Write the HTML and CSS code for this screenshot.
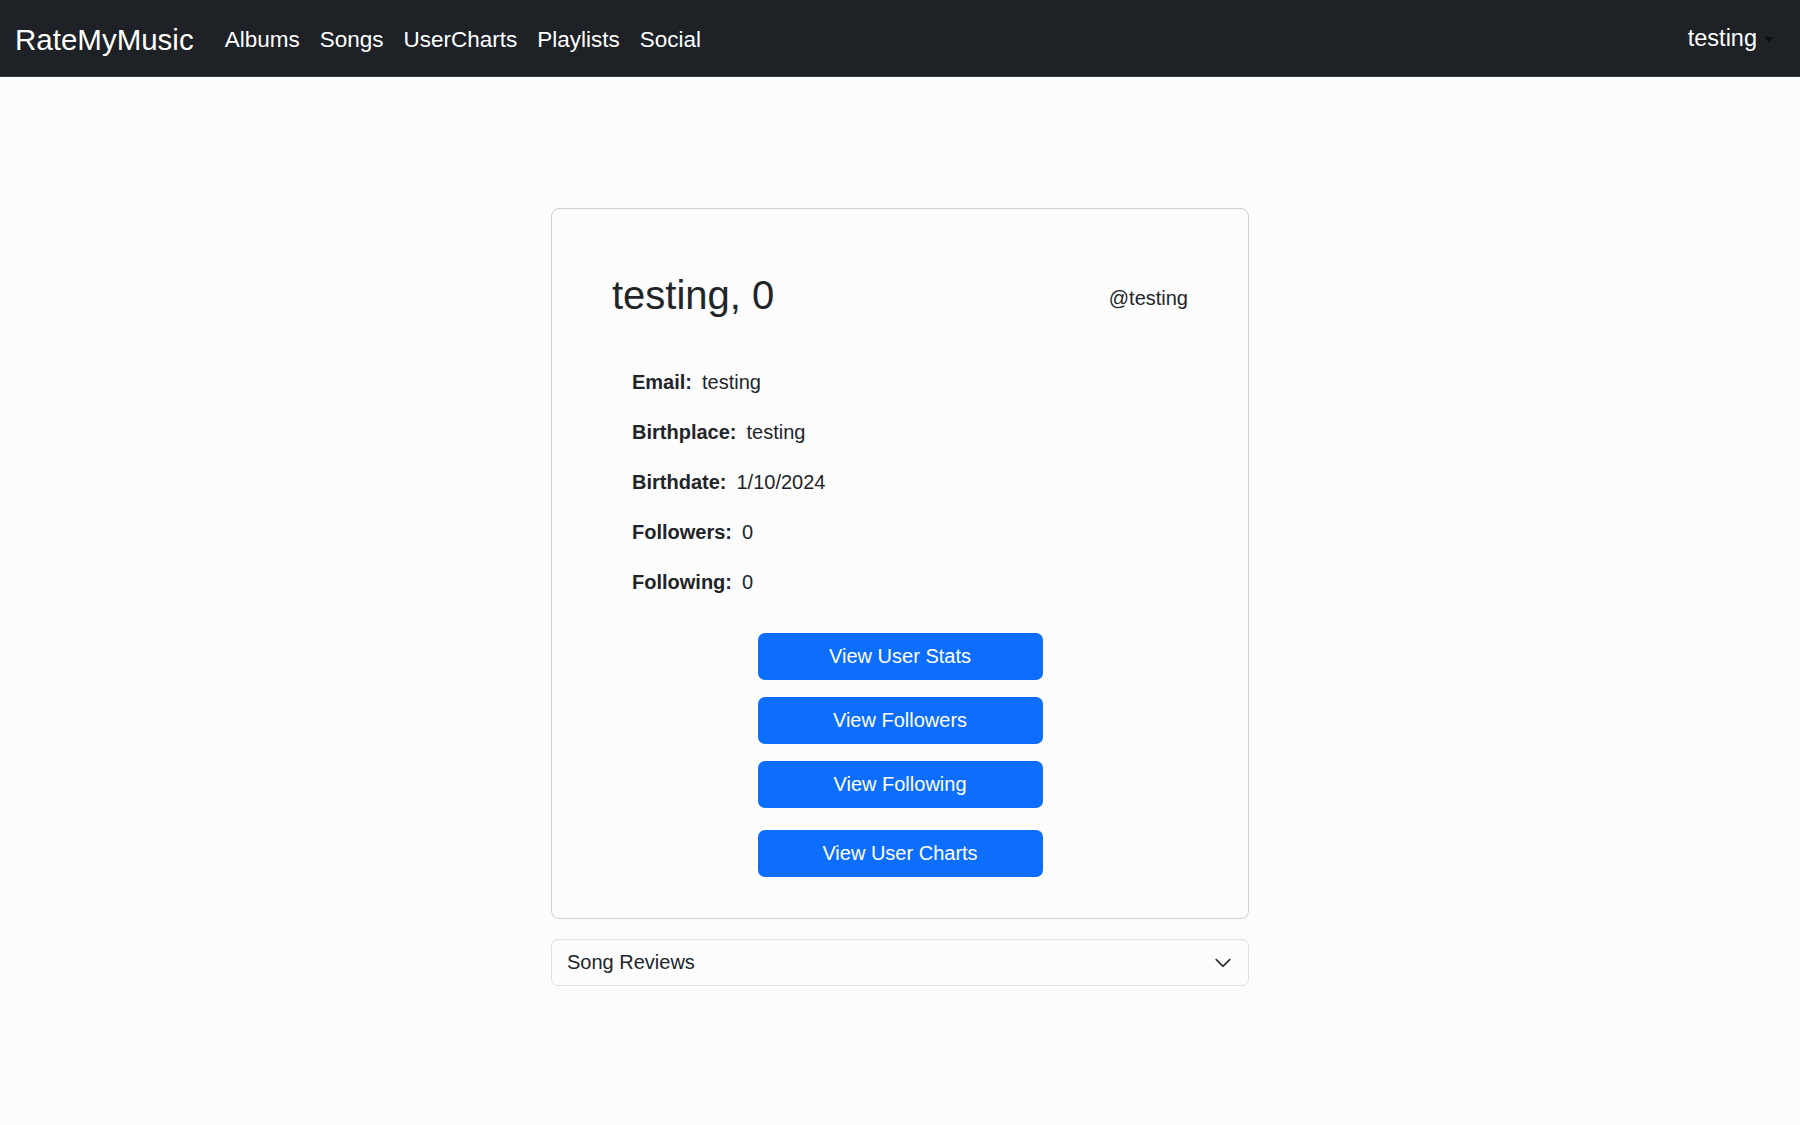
FILE: index.html
```html
<!DOCTYPE html>
<html lang="en">
<head>
<meta charset="utf-8">
<title>RateMyMusic - Profile</title>
<link rel="stylesheet" href="styles.css">
</head>
<body>
<nav class="navbar">
  <a class="brand" href="#">RateMyMusic</a>
  <ul class="nav-links">
    <li><a href="#">Albums</a></li>
    <li><a href="#">Songs</a></li>
    <li><a href="#">UserCharts</a></li>
    <li><a href="#">Playlists</a></li>
    <li><a href="#">Social</a></li>
  </ul>
  <div class="user-menu">
    <span class="user-name">testing</span>
    <span class="caret"></span>
  </div>
</nav>

<main class="container">
  <section class="profile-card">
    <div class="profile-header">
      <h1 class="profile-title">testing, 0</h1>
      <span class="profile-handle">@testing</span>
    </div>
    <div class="details">
      <p class="detail"><span class="label">Email:</span>testing</p>
      <p class="detail"><span class="label">Birthplace:</span>testing</p>
      <p class="detail"><span class="label">Birthdate:</span>1/10/2024</p>
      <p class="detail"><span class="label">Followers:</span>0</p>
      <p class="detail"><span class="label">Following:</span>0</p>
    </div>
    <div class="actions">
      <button class="btn">View User Stats</button>
      <button class="btn">View Followers</button>
      <button class="btn">View Following</button>
      <button class="btn btn-charts">View User Charts</button>
    </div>
  </section>

  <div class="accordion">
    <button class="accordion-button">
      <span>Song Reviews</span>
      <svg class="chevron" viewBox="0 0 16 16" width="18" height="18" aria-hidden="true"><path fill="#212529" stroke="#212529" stroke-width="0.7" stroke-linejoin="round" d="M1.646 4.646a.5.5 0 0 1 .708 0L8 10.293l5.646-5.647a.5.5 0 0 1 .708.708l-6 6a.5.5 0 0 1-.708 0l-6-6a.5.5 0 0 1 0-.708z"/></svg>
    </button>
  </div>
</main>
</body>
</html>
```

FILE: styles.css
```css
* { box-sizing: border-box; }

html, body {
  margin: 0;
  padding: 0;
}

body {
  background: #fcfcfc;
  color: #212529;
  font-family: "Liberation Sans", Arial, sans-serif;
  font-size: 20px;
}

a { text-decoration: none; color: inherit; }

.navbar {
  height: 77px;
  background: #1e2125;
  display: flex;
  align-items: center;
  padding: 0 26px 0 15px;
  border-bottom: 1px solid #3a3d41;
}

.brand {
  color: #ffffff;
  font-size: 29.5px;
  margin-right: 21px;
  margin-top: 3px;
}

.nav-links {
  list-style: none;
  display: flex;
  margin: 4px 0 0;
  padding: 0;
}

.nav-links a {
  display: block;
  padding: 0 10px;
  color: #ffffff;
  font-size: 22.5px;
}

.user-menu {
  margin-left: auto;
  display: flex;
  align-items: center;
  color: #ffffff;
}

.user-name {
  font-size: 23.5px;
}

.caret {
  width: 0;
  height: 0;
  margin-left: 7px;
  margin-top: 2px;
  border-left: 5px solid transparent;
  border-right: 5px solid transparent;
  border-top: 5px solid #0e0f11;
}

.container {
  width: 698px;
  margin: 131px auto 0;
}

.profile-card {
  border: 1px solid #cfcfcf;
  border-radius: 8px;
  padding: 62px 60px 41px;
  background: #fcfcfc;
}

.profile-header {
  display: flex;
  justify-content: space-between;
  align-items: center;
}

.profile-title {
  margin: 0;
  font-size: 40px;
  font-weight: 400;
  line-height: 48px;
}

.profile-handle {
  font-size: 20px;
  margin-top: 6px;
}

.details {
  margin: 48px 0 0 20px;
}

.detail {
  margin: 0 0 20px;
  line-height: 30px;
  font-size: 20px;
}

.label {
  font-weight: 700;
  margin-right: 10px;
}

.actions {
  display: flex;
  flex-direction: column;
  align-items: center;
  gap: 17px;
  margin-top: 36px;
}

.btn {
  width: 285px;
  height: 47px;
  border: none;
  border-radius: 7px;
  background: #0d6efd;
  color: #ffffff;
  font-family: "Liberation Sans", Arial, sans-serif;
  font-size: 20px;
  cursor: pointer;
}

.btn-charts {
  margin-top: 5px;
}

.accordion {
  margin-top: 20px;
  border: 1px solid #dcdfe3;
  border-radius: 7px;
  background: #fcfcfc;
}

.accordion-button {
  width: 100%;
  height: 45px;
  display: flex;
  align-items: center;
  justify-content: space-between;
  padding: 0 16px 0 15px;
  background: transparent;
  border: none;
  font-family: "Liberation Sans", Arial, sans-serif;
  font-size: 20px;
  color: #212529;
}

.chevron {
  display: block;
}
```
